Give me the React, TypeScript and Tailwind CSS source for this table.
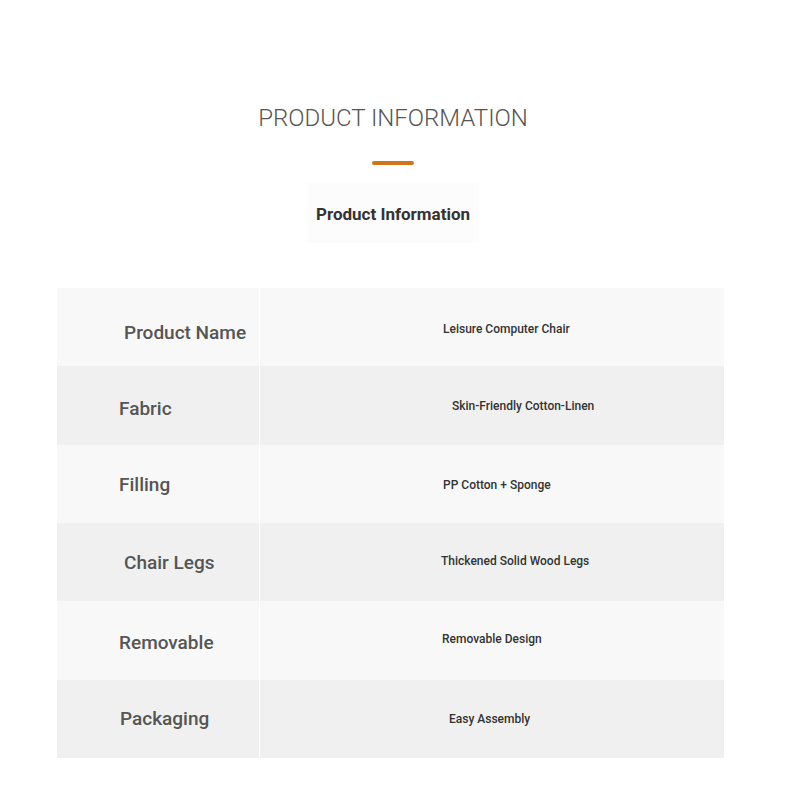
const rows = [
  { label: 'Product Name', value: 'Leisure Computer Chair', bg: 'bg-[#f8f8f8] h-[78px]', lp: 'pl-[67px] pt-[12px]', vp: 'pl-[183px] pt-[4px]' },
  { label: 'Fabric', value: 'Skin-Friendly Cotton-Linen', bg: 'bg-[#f0f0f0] h-[79px]', lp: 'pl-[62px] pt-[8px]', vp: 'pl-[192px] pt-0' },
  { label: 'Filling', value: 'PP Cotton + Sponge', bg: 'bg-[#f8f8f8] h-[78px]', lp: 'pl-[62px] pt-[2px]', vp: 'pl-[183px] pt-[2px]' },
  { label: 'Chair Legs', value: 'Thickened Solid Wood Legs', bg: 'bg-[#f0f0f0] h-[78px]', lp: 'pl-[67px] pt-[2px]', vp: 'pl-[181px] pb-[2px]' },
  { label: 'Removable', value: 'Removable Design', bg: 'bg-[#f8f8f8] h-[79px]', lp: 'pl-[62px] pt-[6px]', vp: 'pl-[182px] pb-[4px]' },
  { label: 'Packaging', value: 'Easy Assembly', bg: 'bg-[#f0f0f0] h-[78px]', lp: 'pl-[63px] pt-0', vp: 'pl-[189px] pt-0' },
]

export default function App() {
  return (
    <div className="w-[790px] min-h-[800px] bg-white font-['Roboto',sans-serif]">
      {/* heading */}
      <div className="flex flex-col items-center pt-[100px] pr-[4px]">
        <h1 className="text-[24px] leading-[36px] font-light text-[#555]">
          PRODUCT INFORMATION
        </h1>
        <div className="mt-[25px] h-[4px] w-[42px] rounded-full bg-[#d2741e]"></div>
        <div className="mt-[18px] w-[172px] h-[60px] flex items-center justify-center bg-[#fcfcfc] pt-[4px]">
          <span className="text-[17px] font-bold text-[#333]">Product Information</span>
        </div>
      </div>

      {/* table */}
      <div className="mt-[45px] ml-[57px] w-[667px] flex flex-col">
        {rows.map((row) => (
          <div key={row.label} className={`flex ${row.bg}`}>
            <div className={`w-[203px] flex items-center border-r border-white ${row.lp}`}>
              <span className="text-[19px] font-medium text-[#555]">{row.label}</span>
            </div>
            <div className={`flex-1 flex items-center ${row.vp}`}>
              <span className="text-[12px] font-medium text-[#333]">{row.value}</span>
            </div>
          </div>
        ))}
      </div>
    </div>
  )
}
